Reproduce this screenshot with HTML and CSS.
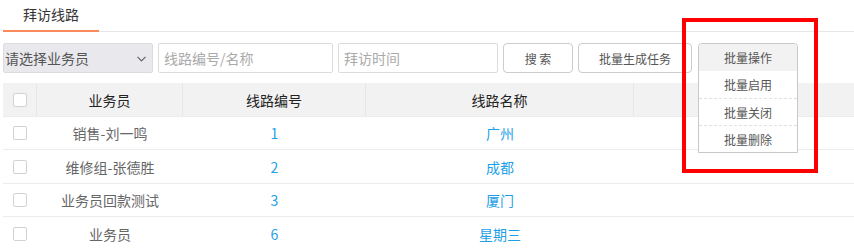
FILE: index.html
```html
<!DOCTYPE html>
<html lang="zh-CN">
<head>
<meta charset="utf-8">
<title>拜访线路</title>
<link rel="stylesheet" href="styles.css">
</head>
<body>
<div class="page">
  <div class="tabs">
    <div class="tab active">拜访线路</div>
  </div>
  <div class="toolbar">
    <div class="select">
      <span>请选择业务员</span>
      <svg class="chev" width="9" height="6" viewBox="0 0 9 6"><path d="M0.5 0.8 L4.5 4.8 L8.5 0.8" fill="none" stroke="#666" stroke-width="1.2"/></svg>
    </div>
    <div class="input w175">线路编号/名称</div>
    <div class="input w160">拜访时间</div>
    <button class="btn w70">搜 索</button>
    <button class="btn w114">批量生成任务</button>
    <div class="batch">
      <div class="batch-head">批量操作</div>
      <ul class="menu">
        <li>批量启用</li>
        <li>批量关闭</li>
        <li>批量删除</li>
      </ul>
    </div>
    <div class="mark"></div>
  </div>
  <div class="table">
    <div class="row head">
      <div class="cell c1"><span class="cb"></span></div>
      <div class="cell c2">业务员</div>
      <div class="cell c3">线路编号</div>
      <div class="cell c4">线路名称</div>
      <div class="cell c5"></div>
    </div>
    <div class="row odd">
      <div class="cell c1"><span class="cb"></span></div>
      <div class="cell c2">销售-刘一鸣</div>
      <div class="cell c3 link">1</div>
      <div class="cell c4 link">广州</div>
      <div class="cell c5"></div>
    </div>
    <div class="row">
      <div class="cell c1"><span class="cb"></span></div>
      <div class="cell c2">维修组-张德胜</div>
      <div class="cell c3 link">2</div>
      <div class="cell c4 link">成都</div>
      <div class="cell c5"></div>
    </div>
    <div class="row odd">
      <div class="cell c1"><span class="cb"></span></div>
      <div class="cell c2">业务员回款测试</div>
      <div class="cell c3 link">3</div>
      <div class="cell c4 link">厦门</div>
      <div class="cell c5"></div>
    </div>
    <div class="row">
      <div class="cell c1"><span class="cb"></span></div>
      <div class="cell c2">业务员</div>
      <div class="cell c3 link">6</div>
      <div class="cell c4 link">星期三</div>
      <div class="cell c5"></div>
    </div>
  </div>
</div>
</body>
</html>
```
FILE: styles.css
```css
* { box-sizing: border-box; }
html, body { margin: 0; padding: 0; background: #fff; overflow: hidden; }
body {
  font-family: "Microsoft YaHei", "Noto Sans CJK SC", "Liberation Sans", sans-serif;
  font-size: 14px;
  color: #333;
}
.page { padding-left: 3px; width: 854px; }

.tabs {
  height: 32px;
  border-bottom: 1px solid #e6e6e6;
  display: flex;
}
.tab {
  width: 96px;
  height: 32px;
  line-height: 28px;
  text-align: center;
  color: #333;
  font-size: 14px;
}
.tab.active { border-bottom: 2px solid #fa8a5c; }

.toolbar {
  position: relative;
  margin-top: 11px;
  height: 30px;
  display: flex;
  gap: 5px;
}
.select {
  width: 150px;
  height: 30px;
  background: #e9e9ed;
  border: 1px solid #dcdcdc;
  border-radius: 2px;
  display: flex;
  align-items: center;
  justify-content: space-between;
  padding: 0 6px 0 1px;
  color: #555;
  font-size: 14px;
}
.chev { margin-top: 1px; }
.input {
  height: 30px;
  border: 1px solid #dcdcdc;
  border-radius: 2px;
  padding-left: 5px;
  line-height: 28px;
  color: #aaa;
  font-size: 14px;
}
.w175 { width: 175px; }
.w160 { width: 160px; }
.btn {
  height: 30px;
  border: 1px solid #ccc;
  border-radius: 4px;
  background: #fff;
  color: #555;
  font-family: inherit;
  font-size: 12px;
  padding: 0;
}
.w70 { width: 70px; }
.w114 { width: 114px; }
.batch {
  width: 100px;
  margin-left: 1px;
  align-self: flex-start;
  border: 1px solid #c8c8c8;
  border-radius: 4px 4px 0 0;
  background: #fff;
  position: relative;
  z-index: 2;
  font-size: 12px;
  color: #555;
}
.batch-head {
  height: 27px;
  line-height: 27px;
  text-align: center;
  background: #f2f2f2;
  border-radius: 4px 4px 0 0;
}
.menu { list-style: none; margin: 0; padding: 0; }
.menu li {
  height: 27px;
  line-height: 27px;
  text-align: center;
}
.menu li + li { border-top: 1px dashed #e0e0e0; }
.mark {
  position: absolute;
  left: 679px;
  top: -25px;
  width: 136px;
  height: 155px;
  border: 4px solid #ff0000;
  z-index: 3;
}

.table { margin-top: 10px; }
.row {
  display: flex;
  height: 34px;
  border-bottom: 1px solid #ececec;
  align-items: stretch;
}
.row.odd { height: 33px; }
.row.head { background: #f2f2f2; border-bottom: 1px solid #ececec; color: #222; }
.cell {
  display: flex;
  align-items: center;
  justify-content: center;
  font-size: 14px;
  color: #666;
}
.head .cell { color: #222; border-right: 1px solid #e6e6e6; }
.head .cell.c5 { border-right: none; }
.c1 { width: 34px; }
.c2 { width: 146px; }
.c3 { width: 183px; }
.c4 { width: 268px; }
.c5 { flex: 1; }
.cell.link { color: #1e9fe8; }
.cb {
  width: 14px;
  height: 14px;
  border: 1px solid #d2d2d2;
  border-radius: 2px;
  background: #fff;
  display: block;
}
```
